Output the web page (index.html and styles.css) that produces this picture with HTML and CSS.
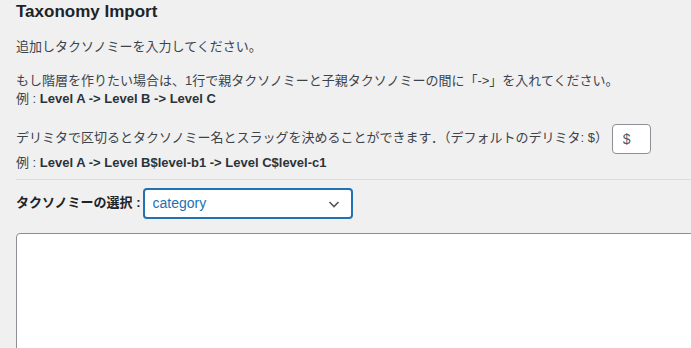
FILE: index.html
```html
<!DOCTYPE html>
<html lang="ja">

<head>
    <meta charset="UTF-8">
    <meta name="viewport" content="width=device-width,initial-scale=1" />
    <title>Taxonomy Import</title>
    <link rel="stylesheet" href="styles.css">
</head>

<body>
    <div class="wrap">
        <h2 class="page-title">Taxonomy Import</h2>

        <p>追加しタクソノミーを入力してください。</p>

        <p>もし階層を作りたい場合は、1行で親タクソノミーと子親タクソノミーの間に「-&gt;」を入れてください。<br>
            例 : <strong>Level A -&gt; Level B -&gt; Level C</strong></p>

        <p class="delimiter-row">
            デリミタで区切るとタクソノミー名とスラッグを決めることができます．（デフォルトのデリミタ: $）
            <input type="text" class="delimiter" value="$"><br>
            例 : <strong>Level A -&gt; Level B$level-b1 -&gt; Level C$level-c1</strong>
        </p>

        <hr>

        <div class="taxonomy-row">
            <label for="taxonomy">タクソノミーの選択 :</label>
            <div class="select-box">
                <select id="taxonomy">
                    <option>category</option>
                    <option>post_tag</option>
                </select>
                <svg class="chevron" width="14" height="14" viewBox="0 0 14 14">
                    <path d="M2.5 5 L7 9.5 L11.5 5" fill="none" stroke="#50575e" stroke-width="1.6" />
                </svg>
            </div>
        </div>

        <textarea class="taxonomy-input"></textarea>
    </div>
</body>

</html>
```

FILE: styles.css
```css
html,
body {
    margin: 0;
    overflow: hidden;
    background: #f0f0f1;
}

body {
    color: #3c434a;
    font-family: "Liberation Sans", "Noto Sans CJK JP", sans-serif;
    font-size: 13px;
    line-height: 1.4;
}

.wrap {
    width: 720px;
    padding-left: 16px;
}

.page-title {
    margin: 0;
    padding-top: 2px;
    color: #1d2327;
    font-size: 17px;
    font-weight: 600;
    line-height: 20px;
}

p {
    margin: 16px 0 0;
}

strong {
    font-weight: 600;
    color: #2c3338;
}

.delimiter-row {
    margin-top: 15px;
}

.delimiter {
    box-sizing: border-box;
    width: 39px;
    height: 30px;
    padding: 0 10px;
    vertical-align: middle;
    border: 1px solid #8c8f94;
    border-radius: 4px;
    background: #fff;
    color: #50575e;
    font-family: inherit;
    font-size: 14px;
}

hr {
    margin: 7px 0 0;
    border: 0;
    border-top: 1px solid #dcdcde;
}

.taxonomy-row {
    display: flex;
    align-items: center;
    gap: 2px;
    margin-top: 8px;
}

.taxonomy-row label {
    color: #1d2327;
    font-weight: 600;
}

.select-box {
    position: relative;
}

select {
    box-sizing: border-box;
    width: 210px;
    height: 31px;
    padding: 0 24px 0 8px;
    border: 2px solid #2271b1;
    border-radius: 4px;
    background: #fff;
    color: #2271b1;
    font-family: inherit;
    font-size: 14px;
    appearance: none;
    outline: none;
}

.chevron {
    position: absolute;
    right: 12px;
    top: 9px;
    pointer-events: none;
}

.taxonomy-input {
    display: block;
    box-sizing: border-box;
    width: 700px;
    height: 160px;
    margin-top: 14px;
    border: 1px solid #8c8f94;
    border-radius: 4px;
    background: #fff;
    resize: none;
}
```
